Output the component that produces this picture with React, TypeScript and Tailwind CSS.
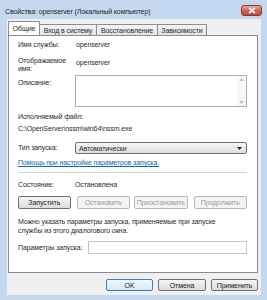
import React from "react";

const btn =
  "h-[13px] flex items-center justify-center rounded-[2px] border text-[7px] leading-none whitespace-nowrap";
const enabledBtn =
  btn + " border-[#707070] bg-gradient-to-b from-[#f6f6f6] to-[#dcdcdc] text-[#222]";
const disabledBtn =
  btn + " border-[#b5b9bd] bg-[#f4f4f4] text-[#9a9a9a]";

export default function App() {
  return (
    <div
      className="w-[267px] h-[300px] bg-[#c4d9ef] flex flex-col text-[#2a2a2a] overflow-hidden whitespace-nowrap tracking-[-0.1px]"
      style={{ fontFamily: '"Liberation Sans", Arial, sans-serif' }}
    >
      {/* Title bar */}
      <div className="h-[19px] flex items-start justify-between pl-[5px] pr-[5px]">
        <div className="mt-[7px] text-[7px] leading-[10px] text-[#1e1e1e] tracking-[-0.1px]">
          Свойства: openserver (Локальный компьютер)
        </div>
        <div className="mt-[5px] w-[21px] h-[11px] rounded-[3px] border border-[#8a3b31] bg-gradient-to-b from-[#e7aa9e] via-[#cf6655] to-[#c2473a] flex items-center justify-center">
          <svg width="8" height="7" viewBox="0 0 8 7">
            <path d="M1 0.8 L7 6.2 M7 0.8 L1 6.2" stroke="#fff" strokeWidth="1.6" />
          </svg>
        </div>
      </div>

      {/* Body */}
      <div className="ml-[7px] mr-[6px] mb-[5px] flex-1 bg-[#f0f0f0] flex flex-col">
        {/* Tabs */}
        <div className="mt-[3px] ml-[1px] h-[13px] flex items-end text-[7px] leading-none relative z-10">
          <div className="h-[14px] w-[32px] border border-b-0 border-[#898c95] bg-white flex items-center justify-center">
            Общие
          </div>
          <div className="h-[11px] w-[57px] border border-l-0 border-b-0 border-[#898c95] bg-gradient-to-b from-[#f4f4f4] to-[#e4e4e4] flex items-center justify-center">
            Вход в систему
          </div>
          <div className="h-[11px] w-[61px] border border-l-0 border-b-0 border-[#898c95] bg-gradient-to-b from-[#f4f4f4] to-[#e4e4e4] flex items-center justify-center">
            Восстановление
          </div>
          <div className="h-[11px] w-[49px] border border-l-0 border-b-0 border-[#898c95] bg-gradient-to-b from-[#f4f4f4] to-[#e4e4e4] flex items-center justify-center">
            Зависимости
          </div>
        </div>

        {/* Panel */}
        <div className="ml-[1px] w-[250px] h-[238px] border border-[#898c95] bg-white pl-[9px] pr-[10px] flex flex-col text-[7px]">
          {/* Имя службы */}
          <div className="mt-[4px] h-[10px] flex items-center leading-[10px]">
            <div className="w-[58px]">Имя службы:</div>
            <div>openserver</div>
          </div>
          {/* Отображаемое имя */}
          <div className="mt-[7px] h-[16px] flex items-start">
            <div className="w-[58px] leading-[8px]">
              Отображаемое
              <br />
              имя:
            </div>
            <div className="leading-[10px] mt-[1px]">openserver</div>
          </div>
          {/* Описание */}
          <div className="mt-[2px] h-[32px] flex items-start">
            <div className="w-[57px] mt-[3px] leading-[10px]">Описание:</div>
            <div className="flex-1 h-[32px] border border-[#abadb3] flex">
              <div className="flex-1" />
              <div className="w-[9px] flex flex-col items-center justify-between py-[2px] bg-[#f7f7f7]">
                <svg width="5" height="3" viewBox="0 0 5 3">
                  <path d="M0 3 L2.5 0 L5 3 Z" fill="#c4c4c4" />
                </svg>
                <svg width="5" height="3" viewBox="0 0 5 3">
                  <path d="M0 0 L2.5 3 L5 0 Z" fill="#c4c4c4" />
                </svg>
              </div>
            </div>
          </div>
          {/* Исполняемый файл */}
          <div className="mt-[5px] h-[10px] leading-[10px]">Исполняемый файл:</div>
          <div className="mt-[2px] h-[10px] leading-[10px]">
            C:\OpenServer\nssm\win64\nssm.exe
          </div>
          {/* Тип запуска */}
          <div className="mt-[8px] h-[12px] flex items-center">
            <div className="w-[57px] leading-[10px]">Тип запуска:</div>
            <div className="flex-1 h-[12px] border border-[#707070] rounded-[2px] bg-gradient-to-b from-[#f5f5f5] to-[#e0e0e0] flex items-center justify-between pl-[3px] pr-[4px]">
              <span className="leading-none">Автоматически</span>
              <svg width="5" height="3" viewBox="0 0 5 3">
                <path d="M0 0 L2.5 3 L5 0 Z" fill="#222" />
              </svg>
            </div>
          </div>
          {/* Link */}
          <div className="mt-[4px] h-[10px] leading-[10px] text-[#0a66b7] underline">
            Помощь при настройке параметров запуска.
          </div>
          {/* Separator */}
          <div className="mt-[4px] h-px bg-[#d5d5d5]" />
          {/* Состояние */}
          <div className="mt-[7px] h-[10px] flex items-center leading-[10px]">
            <div className="w-[57px]">Состояние:</div>
            <div>Остановлена</div>
          </div>
          {/* Buttons */}
          <div className="mt-[6px] flex items-center">
            <div className={enabledBtn + " w-[53px]"}>Запустить</div>
            <div className={disabledBtn + " w-[54px] ml-[6px]"}>Остановить</div>
            <div className={disabledBtn + " w-[54px] ml-[4px]"}>Приостановить</div>
            <div className={disabledBtn + " w-[54px] ml-[6px]"}>Продолжить</div>
          </div>
          {/* Help text */}
          <div className="mt-[8px] leading-[9px]">
            Можно указать параметры запуска, применяемые при запуске
            <br />
            службы из этого диалогового окна.
          </div>
          {/* Параметры запуска */}
          <div className="mt-[6px] h-[13px] flex items-center">
            <div className="w-[70px] leading-[10px]">Параметры запуска:</div>
            <div className="flex-1 h-[13px] border border-[#c5c5c5] bg-white" />
          </div>
        </div>

        {/* Bottom buttons */}
        <div className="mt-[6px] flex justify-end pr-[3px] text-[7px]">
          <div className="h-[12px] w-[47px] flex items-center justify-center rounded-[2px] border border-[#3c7fb1] bg-gradient-to-b from-[#f2f8fc] to-[#d6e7f4] text-[#222] leading-none">
            OK
          </div>
          <div className="ml-[5px] h-[12px] w-[48px] flex items-center justify-center rounded-[2px] border border-[#707070] bg-gradient-to-b from-[#f6f6f6] to-[#dcdcdc] text-[#222] leading-none">
            Отмена
          </div>
          <div className="ml-[5px] h-[12px] w-[47px] flex items-center justify-center rounded-[2px] border border-[#707070] bg-gradient-to-b from-[#f6f6f6] to-[#dcdcdc] text-[#222] leading-none">
            Применить
          </div>
        </div>
      </div>
    </div>
  );
}
